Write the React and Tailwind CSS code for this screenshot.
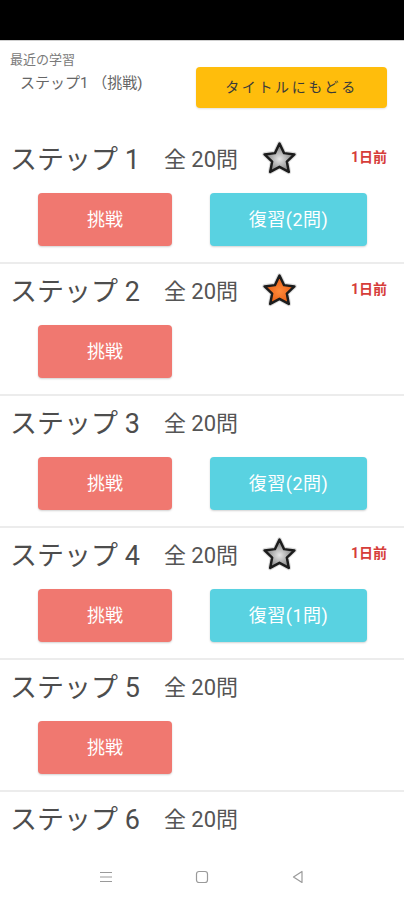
import React from "react";

const steps = [
  { n: 1, star: "gray", ago: true, review: 2 },
  { n: 2, star: "orange", ago: true, review: 0 },
  { n: 3, star: null, ago: false, review: 2 },
  { n: 4, star: "gray", ago: true, review: 1 },
  { n: 5, star: null, ago: false, review: 0 },
  { n: 6, star: null, ago: false, review: 0 },
];

function Star({ kind, id }) {
  const inner = kind === "orange" ? "#ff8a3a" : "#e6e6e6";
  const outer = kind === "orange" ? "#e2560e" : "#6f6f6f";
  const d = "M12 2.3l2.95 6.2 6.75.85-4.95 4.65 1.3 6.7L12 17.4l-6.05 3.3 1.3-6.7L2.3 9.35l6.75-.85z";
  return (
    <svg width="37" height="37" viewBox="0 0 24 24">
      <defs>
        <radialGradient id={id} cx="50%" cy="55%" r="55%">
          <stop offset="0%" stopColor={inner} />
          <stop offset="100%" stopColor={outer} />
        </radialGradient>
      </defs>
      <path d={d} fill="none" stroke="#888" strokeWidth="3" strokeLinejoin="round" opacity="0.3" />
      <path d={d} fill={`url(#${id})`} stroke="#1c1c1c" strokeWidth="1.6" strokeLinejoin="round" />
    </svg>
  );
}

function Row({ s }) {
  return (
    <div className="border-b-2 border-[#ececec] pt-3 pb-4">
      <div className="flex h-8 items-center pl-[10px] pr-[17px]">
        <span className="text-[27px] leading-8 text-[#4d4d4d]">ステップ {s.n}</span>
        <span className="ml-[24px] text-[22px] leading-8 text-[#555]">全 20問</span>
        {s.star && (
          <span className="ml-[23px] -mt-[4px] flex">
            <Star kind={s.star} id={`g${s.n}`} />
          </span>
        )}
        {s.ago && (
          <span className="ml-auto -mt-[6px] text-[14px] font-bold text-[#d63d3a]">1日前</span>
        )}
      </div>
      <div className="mt-[17px] flex h-[53px]">
        <button className="ml-[38px] h-[53px] w-[134px] rounded-[4px] bg-[#f07870] text-[18px] font-normal text-white shadow-[0_1px_2px_rgba(0,0,0,0.18)]">
          挑戦
        </button>
        {s.review > 0 && (
          <button className="ml-[38px] h-[53px] w-[157px] rounded-[4px] bg-[#59d2e1] text-[18px] font-normal tracking-[0.5px] text-white shadow-[0_1px_2px_rgba(0,0,0,0.18)]">
            復習({s.review}問)
          </button>
        )}
      </div>
    </div>
  );
}

export default function App() {
  return (
    <div className="flex h-[900px] w-[404px] flex-col overflow-hidden bg-white font-['Roboto','Noto_Sans_CJK_JP',sans-serif]">
      <div className="h-10 shrink-0 bg-black" />
      <div className="h-px shrink-0 bg-[#cfcfcf]" />
      <div className="flex h-[91px] shrink-0 items-start">
        <div className="flex flex-col pl-[10px] pt-[11px]">
          <span className="text-[13px] leading-4 text-[#7a7a7a]">最近の学習</span>
          <span className="mt-[5px] pl-[10px] text-[15px] leading-5 text-[#666]">ステップ1 （挑戦)</span>
        </div>
        <button className="ml-auto mr-[17px] mt-[26px] h-[41px] w-[191px] rounded-[4px] bg-[#ffbd0c] text-[14px] tracking-[2.6px] text-[#3a3a3a] shadow-[0_1px_2px_rgba(0,0,0,0.12)]">
          タイトルにもどる
        </button>
      </div>
      <div className="flex-1 overflow-hidden">
        {steps.map((s) => (
          <Row key={s.n} s={s} />
        ))}
      </div>
      <div className="flex h-[50px] shrink-0 items-center justify-center gap-[80px] bg-white pt-[4px]">
        <svg width="16" height="16" viewBox="0 0 16 16" aria-hidden="true">
          <path d="M2 3.5h12M2 8h12M2 12.5h12" stroke="#9a9a9a" strokeWidth="1.2" />
        </svg>
        <svg width="16" height="16" viewBox="0 0 16 16" aria-hidden="true">
          <rect x="2.5" y="2.5" width="11" height="11" rx="2.5" fill="none" stroke="#9a9a9a" strokeWidth="1.2" />
        </svg>
        <svg width="16" height="16" viewBox="0 0 16 16" aria-hidden="true">
          <path d="M12 2.5v11L3.5 8z" fill="none" stroke="#9a9a9a" strokeWidth="1.2" strokeLinejoin="round" />
        </svg>
      </div>
    </div>
  );
}
